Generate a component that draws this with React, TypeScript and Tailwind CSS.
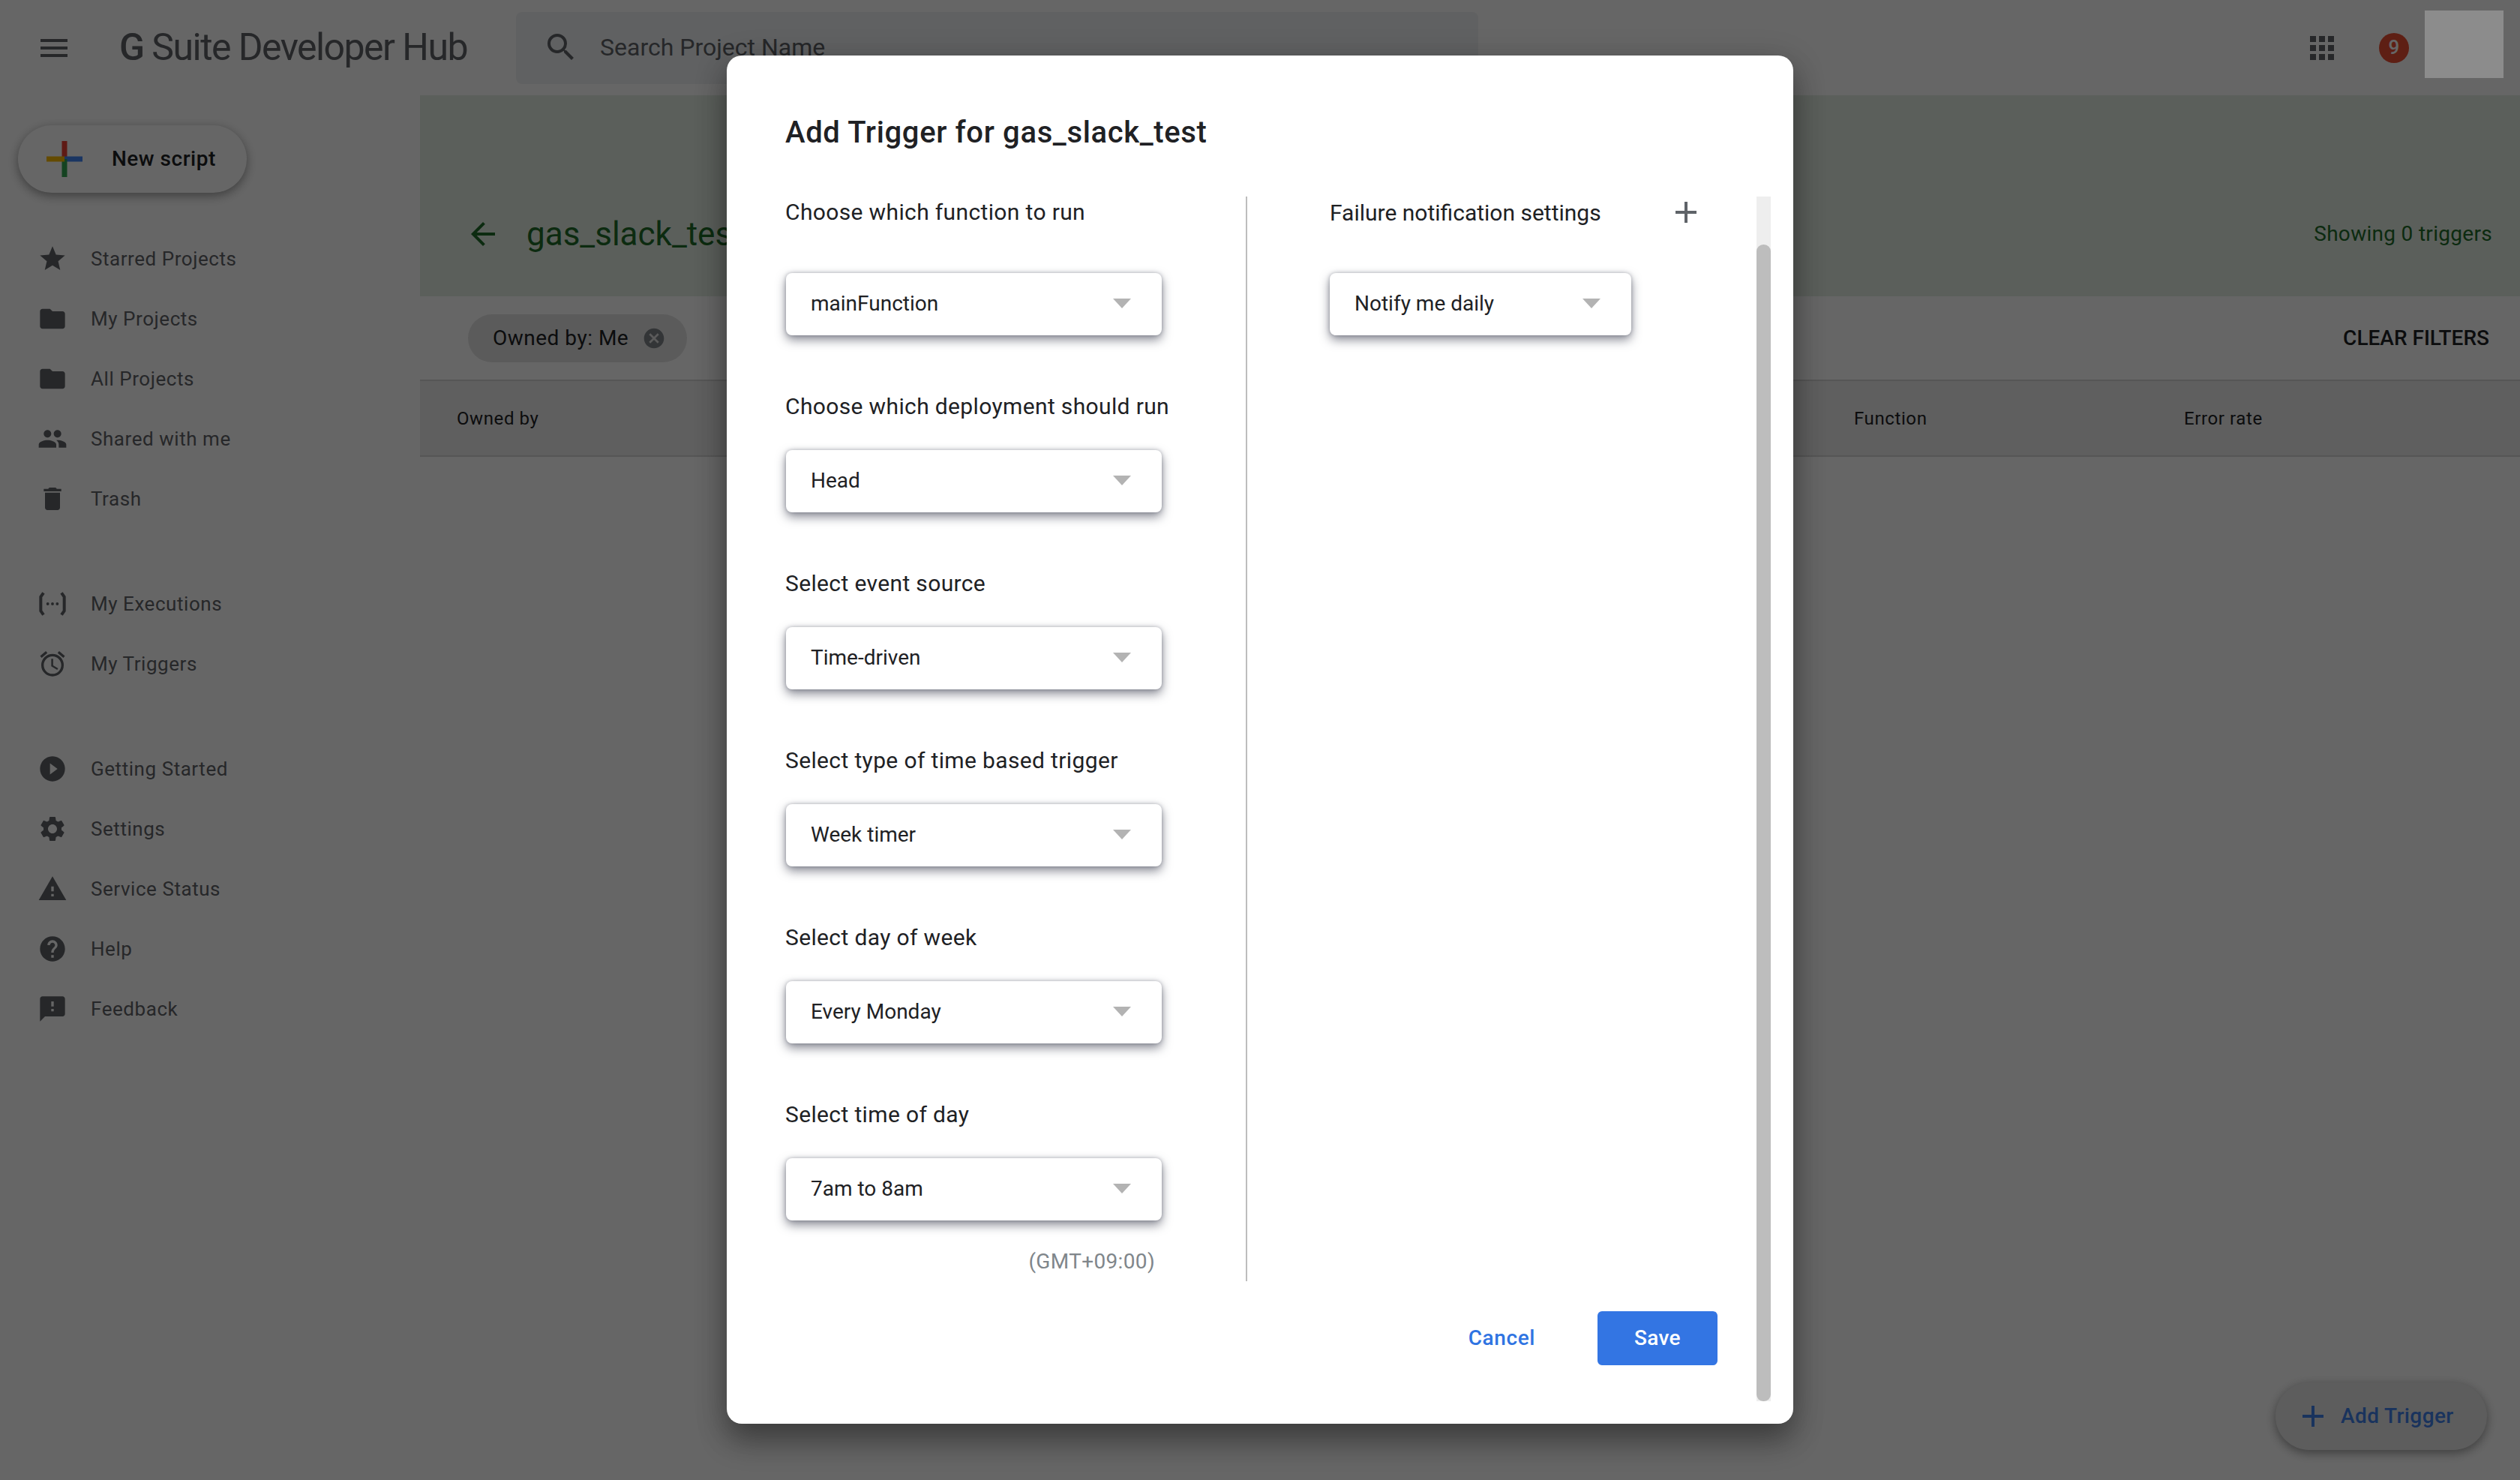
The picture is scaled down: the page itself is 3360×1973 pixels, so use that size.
import React from "react";
import {
  MdMenu, MdSearch, MdApps, MdArrowBack, MdCancel, MdAdd, MdStar, MdFolder, MdPeople, MdDelete,
  MdOutlineAlarm, MdPlayCircleFilled, MdSettings, MdWarning, MdHelp, MdFeedback,
} from "react-icons/md";

function ExecIcon() {
  return (
    <svg width="40" height="40" viewBox="0 0 24 24" fill="none" stroke="#5f6368" strokeWidth="2.4">
      <path d="M4.8 3.2 L2.6 6.4 V17.6 L4.8 20.8" />
      <path d="M19.2 3.2 L21.4 6.4 V17.6 L19.2 20.8" />
      <circle cx="8.2" cy="12" r="1.15" fill="#5f6368" stroke="none" />
      <circle cx="12" cy="12" r="1.15" fill="#5f6368" stroke="none" />
      <circle cx="15.8" cy="12" r="1.15" fill="#5f6368" stroke="none" />
    </svg>
  );
}

function NavItem({ icon, label }: { icon: React.ReactNode; label: string }) {
  return (
    <div className="flex h-[80px] items-center pl-[50px]">
      <span className="flex h-[40px] w-[40px] items-center justify-center text-[#5f6368]">{icon}</span>
      <span className="ml-[31px] text-[26px] tracking-[0.55px] text-[#5f6368]">{label}</span>
    </div>
  );
}

function Arrow() {
  return (
    <svg width="24" height="13" viewBox="0 0 24 13" className="shrink-0">
      <polygon points="0,0 24,0 12,13" fill="#b3b3b3" />
    </svg>
  );
}

function SelectBox({ value, className }: { value: string; className: string }) {
  return (
    <div className={`flex h-[83px] items-center justify-between rounded-[8px] bg-white pb-[2px] pl-[33px] pr-[41px] shadow-[0_6px_14px_rgba(60,64,80,0.6),0_0_5px_rgba(60,64,80,0.35)] ${className}`}>
      <span className="text-[28px] text-[#202124]">{value}</span>
      <Arrow />
    </div>
  );
}

function Field({ label, value, first }: { label: string; value: string; first?: boolean }) {
  return (
    <div className={first ? "" : "mt-[74px]"}>
      <div className={`-ml-[1px] h-[42px] whitespace-nowrap text-[30px] leading-[42px] tracking-[0.36px] text-[#202124] ${first ? "mb-[60px]" : "mb-[37px]"}`}>{label}</div>
      <SelectBox value={value} className="w-[501px]" />
    </div>
  );
}

export default function App() {
  return (
    <div className="relative h-[1973px] w-[3360px] overflow-hidden bg-white [font-family:Roboto,sans-serif]">
      <header className="flex h-[127px] items-center pl-[48px] pr-[22px]">
        <MdMenu size={48} color="#5f6368" />
        <div className="ml-[63px] w-[529px] whitespace-nowrap text-[50px] tracking-[-1.55px] text-[#5f6368]">
          <span className="font-medium">G</span> Suite Developer Hub
        </div>
        <div className="flex h-[96px] w-[1283px] items-center rounded-[8px] bg-[#f1f3f4] pb-[2px] pl-[36px]">
          <MdSearch size={48} color="#5f6368" />
          <span className="ml-[28px] text-[32px] text-[#5f6368]">Search Project Name</span>
        </div>
        <div className="ml-auto flex items-center">
          <MdApps size={48} color="#5f6368" />
          <span className="ml-[52px] flex h-[40px] w-[40px] items-center justify-center rounded-full bg-[#ea4f34] text-[26px] font-medium text-white">9</span>
          <div className="relative z-20 mb-[9px] ml-[21px] h-[90px] w-[105px] bg-[#8c8c8c]" />
        </div>
      </header>

      <div className="flex">
        <aside className="w-[560px] shrink-0 pt-[40px]">
          <div className="ml-[24px] flex h-[90px] w-[305px] items-center rounded-full bg-white shadow-[0_4px_14px_rgba(0,0,0,0.4)]">
            <svg width="48" height="48" viewBox="0 0 48 48" className="ml-[38px]">
              <rect x="20.5" y="0" width="7" height="24" fill="#ea4335" />
              <rect x="24" y="20.5" width="24" height="7" fill="#4285f4" />
              <rect x="20.5" y="24" width="7" height="24" fill="#34a853" />
              <rect x="0" y="20.5" width="24" height="7" fill="#fbbc04" />
            </svg>
            <span className="ml-[39px] text-[28px] font-medium tracking-[0.5px] text-[#202124]">New script</span>
          </div>
          <nav className="mt-[48px]">
            <NavItem icon={<MdStar size={40} />} label="Starred Projects" />
            <NavItem icon={<MdFolder size={40} />} label="My Projects" />
            <NavItem icon={<MdFolder size={40} />} label="All Projects" />
            <NavItem icon={<MdPeople size={40} />} label="Shared with me" />
            <NavItem icon={<MdDelete size={40} />} label="Trash" />
          </nav>
          <nav className="mt-[60px]">
            <NavItem icon={<ExecIcon />} label="My Executions" />
            <NavItem icon={<MdOutlineAlarm size={40} />} label="My Triggers" />
          </nav>
          <nav className="mt-[60px]">
            <NavItem icon={<MdPlayCircleFilled size={40} />} label="Getting Started" />
            <NavItem icon={<MdSettings size={40} />} label="Settings" />
            <NavItem icon={<MdWarning size={40} />} label="Service Status" />
            <NavItem icon={<MdHelp size={40} />} label="Help" />
            <NavItem icon={<MdFeedback size={40} />} label="Feedback" />
          </nav>
        </aside>

        <main className="flex-1">
          <div className="flex h-[268px] items-end justify-between bg-[#e3ede3] pb-[53px] pl-[60px] pr-[37px]">
            <div className="flex h-[60px] items-center">
              <MdArrowBack size={48} color="#1e6b2a" />
              <span className="ml-[34px] text-[44px] text-[#1e6b2a]">gas_slack_test</span>
            </div>
            <span className="flex h-[60px] items-center text-[28px] tracking-[0.3px] text-[#1e6b2a]">Showing 0 triggers</span>
          </div>
          <div className="flex h-[111px] items-center justify-between pl-[64px] pr-[41px]">
            <div className="flex h-[64px] w-[292px] items-center rounded-full bg-[#e4e4e4] pl-[33px]">
              <span className="text-[28px] tracking-[0.5px] text-[#202124]">Owned by: Me</span>
              <MdCancel size={32} color="#80868b" className="ml-auto mr-[28px]" />
            </div>
            <span className="text-[28px] font-medium text-[#202124]">CLEAR FILTERS</span>
          </div>
          <div className="flex h-[103px] items-center border-y-2 border-[#d8d8d8] bg-[#eeeeee] pl-[49px] text-[24px] tracking-[0.6px] text-[#202124]">
            <span className="w-[1863px]">Owned by</span>
            <span className="w-[440px]">Function</span>
            <span>Error rate</span>
          </div>
        </main>
      </div>

      <div className="absolute bottom-[40px] right-[44px] flex h-[90px] w-[282px] items-center rounded-full bg-[#e8e8e8] pl-[26px] shadow-[0_4px_14px_rgba(0,0,0,0.4)]">
        <MdAdd size={48} color="#3f7fe8" />
        <span className="ml-[13px] text-[28px] font-medium tracking-[0.4px] text-[#3f7fe8]">Add Trigger</span>
      </div>

      <div className="absolute inset-0 z-10 flex items-center justify-center bg-black/60">
        <div className="mb-[1px] h-[1824px] w-[1422px] rounded-[20px] bg-white pl-[79px] pr-[30px] shadow-[0_24px_38px_rgba(0,0,0,0.3),0_9px_46px_rgba(0,0,0,0.2)]">
          <h2 className="-ml-[1px] h-[188px] whitespace-nowrap pt-[73px] text-[40px] font-medium leading-[60px] tracking-[0.65px] text-[#202124]">Add Trigger for gas_slack_test</h2>
          <div className="flex">
            <div className="w-[1294px]">
              <div className="flex h-[1446px]">
                <div className="w-[615px] border-r-2 border-[#bdbdbd]">
                  <Field first label="Choose which function to run" value="mainFunction" />
                  <Field label="Choose which deployment should run" value="Head" />
                  <Field label="Select event source" value="Time-driven" />
                  <Field label="Select type of time based trigger" value="Week timer" />
                  <Field label="Select day of week" value="Every Monday" />
                  <Field label="Select time of day" value="7am to 8am" />
                  <div className="mt-[37px] w-[492px] text-right text-[28px] leading-[36px] tracking-[0.35px] text-[#80868b]">(GMT+09:00)</div>
                </div>
                <div className="pl-[110px]">
                  <div className="mb-[60px] flex h-[42px] w-[489px] items-center justify-between">
                    <span className="text-[30px] text-[#202124]">Failure notification settings</span>
                    <svg width="28" height="28" viewBox="0 0 28 28" stroke="#5f6368" strokeWidth="4">
                      <path d="M14 0 V28 M0 14 H28" />
                    </svg>
                  </div>
                  <SelectBox value="Notify me daily" className="w-[402px]" />
                </div>
              </div>
              <div className="mt-[40px] flex items-center justify-end pr-[52px]">
                <span className="mr-[83px] text-[28px] font-medium tracking-[0.6px] text-[#2f74e2]">Cancel</span>
                <span className="flex h-[72px] w-[160px] items-center justify-center rounded-[6px] bg-[#3375e3] text-[28px] font-medium tracking-[0.3px] text-white">Save</span>
              </div>
            </div>
            <div className="h-[1606px] w-[19px] bg-[#eeeeee] pt-[64px]">
              <div className="h-full rounded-[9px] bg-[#bdbdbd]" />
            </div>
          </div>
        </div>
      </div>
    </div>
  );
}
